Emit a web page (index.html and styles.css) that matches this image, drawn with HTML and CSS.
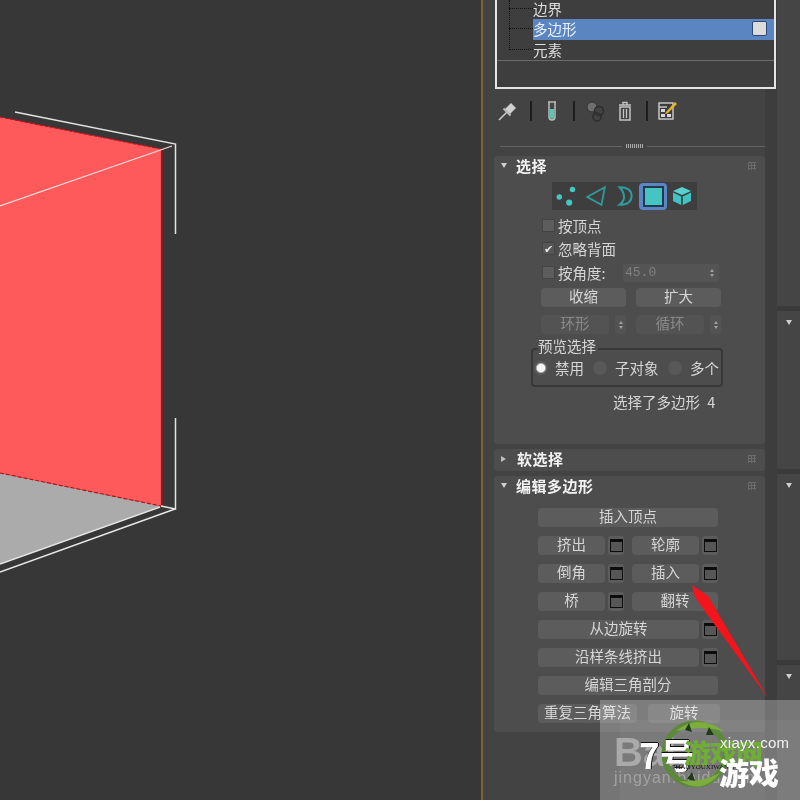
FILE: index.html
```html
<!DOCTYPE html>
<html lang="zh">
<head>
<meta charset="utf-8">
<title>3ds Max 编辑多边形</title>
<link rel="stylesheet" href="styles.css">
</head>
<body>
<div class="app">
  <svg class="viewport" width="481" height="800" viewBox="0 0 481 800">
    <polygon points="0,473 161,506 0,564" fill="#ababab"/>
    <polygon points="0,117 161,149 161,506 0,473" fill="#fe5a5c"/>
    <line x1="0" y1="117" x2="161" y2="149" stroke="#b3141a" stroke-width="1.2" stroke-dasharray="4 1"/>
    <line x1="0" y1="473" x2="161" y2="506" stroke="#b3141a" stroke-width="1.2" stroke-dasharray="4 2"/>
    <line x1="161.7" y1="149" x2="161.7" y2="506" stroke="#a81015" stroke-width="1.6"/>
    <line x1="0" y1="206" x2="172" y2="146" stroke="#f4dcd8" stroke-width="1.2"/>
    <polyline points="15,112 175.5,144 175.5,234" fill="none" stroke="#e2e2e2" stroke-width="1.5"/>
    <polyline points="175.5,418 175.5,509 161,506" fill="none" stroke="#e2e2e2" stroke-width="1.5"/>
    <line x1="160" y1="507" x2="0" y2="564" stroke="#e6e6e6" stroke-width="1.5"/>
    <line x1="175" y1="509" x2="0" y2="572" stroke="#e6e6e6" stroke-width="1.5"/>
  </svg>
  <div class="gold"></div>
  <div class="panel">
    <div class="list">
      <div class="trunk"></div>
      <div class="list-row first"><span class="branch"></span><span>边界</span></div>
      <div class="list-row selected"><span class="branch"></span><span class="sel-label">多边形</span><span class="swatch"></span></div>
      <div class="list-row last"><span class="branch"></span><span>元素</span></div>
    </div>

    <div class="toolbar">
      <svg width="20" height="20" viewBox="0 0 20 20"><path d="M1 19 L9 11" stroke="#c9c9c9" stroke-width="1.6"/><path d="M7 8 L13 2 L18 7 L12 13 Z" fill="#cfcfcf"/><path d="M5.5 7.5 L12.5 14.5" stroke="#bdbdbd" stroke-width="2"/></svg>
      <span class="tool-sep"></span>
      <svg width="12" height="20" viewBox="0 0 12 20"><path d="M2 1 H10 M3 1 V16 Q3 19 6 19 Q9 19 9 16 V1" fill="none" stroke="#bcbcbc" stroke-width="1.5"/><path d="M4 8 H8 V16 Q8 18 6 18 Q4 18 4 16 Z" fill="#56c8b4"/></svg>
      <span class="tool-sep"></span>
      <svg width="22" height="22" viewBox="0 0 22 22"><circle cx="7" cy="7" r="5" fill="#6f6f6f" stroke="#333" stroke-width="1"/><circle cx="14" cy="11" r="4.5" fill="none" stroke="#2e2e2e" stroke-width="1.6"/><circle cx="12" cy="17" r="4" fill="none" stroke="#2e2e2e" stroke-width="1.6"/></svg>
      <svg width="14" height="20" viewBox="0 0 14 20"><path d="M1 4 H13 M5 4 V1.5 H9 V4" fill="none" stroke="#c4c4c4" stroke-width="1.4"/><path d="M2 6 H12 V19 H2 Z" fill="none" stroke="#c4c4c4" stroke-width="1.5"/><path d="M5.5 8 V17 M8.5 8 V17" stroke="#c4c4c4" stroke-width="1.3"/></svg>
      <span class="tool-sep"></span>
      <svg width="20" height="20" viewBox="0 0 20 20"><rect x="1" y="2" width="14" height="16" fill="#3c3c3c" stroke="#cfcfcf" stroke-width="1.4"/><path d="M1 6 H9" stroke="#cfcfcf" stroke-width="1.4"/><path d="M3 8 H7 V11 H3 Z M3 13 H7 V16 H3 Z M9 13 H13 V16 H9 Z" fill="#d8d8d8"/><path d="M8 11 L17 1 L19 3 L10 12 L7 13 Z" fill="#e5b32a"/></svg>
    </div>

    <div class="divider"><span class="divider-line"></span><span class="divider-grip"></span><span class="divider-line"></span></div>

    <section class="rollout rollout-select">
      <header class="roll-head"><span class="tri-down"></span><h2>选择</h2><span class="grip"></span></header>
      <div class="subobj">
        <span class="sub-btn"><svg width="22" height="22" viewBox="0 0 20 20" fill="#43c7c5"><circle cx="3" cy="11" r="2.5"/><circle cx="15" cy="4" r="2.5"/><circle cx="12" cy="16" r="2.8"/></svg></span>
        <span class="sub-btn"><svg width="22" height="22" viewBox="0 0 20 20"><path d="M18 2 L2 11 L15 18 Z" fill="none" stroke="#2f9c9c" stroke-width="1.6"/></svg></span>
        <span class="sub-btn"><svg width="18" height="22" viewBox="0 0 16 20"><path d="M3 2 Q14 2 14 10 Q14 18 3 18 Q8 14 7 10 Q7 6 3 2 Z" fill="none" stroke="#2f9c9c" stroke-width="1.8"/></svg></span>
        <span class="sub-btn active"><span class="poly-square"></span></span>
        <span class="sub-btn"><svg width="20" height="20" viewBox="0 0 20 20"><path d="M10 1 L19 5 L10 9 L1 5 Z" fill="#56d3d1"/><path d="M1 6.5 L9.2 10.4 V19 L1 15 Z" fill="#3fc4c4"/><path d="M19 6.5 L10.8 10.4 V19 L19 15 Z" fill="#3fc4c4"/></svg></span>
      </div>
      <div class="checks">
        <label class="check-row"><span class="check"></span><span>按顶点</span></label>
        <label class="check-row"><span class="check checked">✔</span><span>忽略背面</span></label>
        <div class="check-row angle"><span class="check"></span><span class="angle-label">按角度:</span>
          <span class="spinner-field"><span class="spin-value">45.0</span><span class="spin-arrows"><i class="up"></i><i class="down"></i></span></span>
        </div>
      </div>
      <div class="btn-row first">
        <button class="btn grow">收缩</button>
        <button class="btn grow">扩大</button>
      </div>
      <div class="btn-row second">
        <div class="spin-pair"><button class="btn grow off">环形</button><span class="mini-spin"><i class="up"></i><i class="down"></i></span></div>
        <div class="spin-pair"><button class="btn grow off">循环</button><span class="mini-spin"><i class="up"></i><i class="down"></i></span></div>
      </div>
      <fieldset class="group">
        <legend>预览选择</legend>
        <span class="radio on"></span><span class="r1">禁用</span>
        <span class="radio"></span><span class="r2">子对象</span>
        <span class="radio"></span><span class="r3">多个</span>
      </fieldset>
      <p class="status">选择了多边形 4</p>
    </section>

    <section class="rollout rollout-soft">
      <header class="roll-head"><span class="tri-right"></span><h2>软选择</h2><span class="grip"></span></header>
    </section>

    <section class="rollout rollout-edit">
      <header class="roll-head"><span class="tri-down"></span><h2>编辑多边形</h2><span class="grip"></span></header>
      <div class="edit-grid">
        <button class="btn">插入顶点</button>
        <div class="split">
          <div class="pair"><button class="btn grow">挤出</button><span class="setting"><span class="window"></span></span></div>
          <div class="pair"><button class="btn grow">轮廓</button><span class="setting"><span class="window"></span></span></div>
        </div>
        <div class="split">
          <div class="pair"><button class="btn grow">倒角</button><span class="setting"><span class="window"></span></span></div>
          <div class="pair"><button class="btn grow">插入</button><span class="setting"><span class="window"></span></span></div>
        </div>
        <div class="split">
          <div class="pair"><button class="btn grow">桥</button><span class="setting"><span class="window"></span></span></div>
          <div class="pair"><button class="btn grow">翻转</button></div>
        </div>
        <div class="pair"><button class="btn grow">从边旋转</button><span class="setting"><span class="window"></span></span></div>
        <div class="pair"><button class="btn grow">沿样条线挤出</button><span class="setting"><span class="window"></span></span></div>
        <button class="btn">编辑三角剖分</button>
        <div class="last-row"><button class="btn retri">重复三角算法</button><button class="btn turn">旋转</button></div>
      </div>
    </section>
  </div>

  <div class="gutter"></div>
  <div class="side">
    <div class="side-box h1"></div>
    <div class="side-box h2"><span class="tri-down"></span></div>
    <div class="side-box h3"><span class="tri-down"></span></div>
    <div class="side-box h4"><span class="tri-down"></span></div>
  </div>

  <svg class="arrow" width="90" height="125" viewBox="0 0 90 125"><polygon points="2,0 18,11 32,35 78,113 14,25 5,12" fill="#f4141c"/></svg>

  <div class="mark">
    <div class="mark-inner">
      <span class="baidu">Bai</span>
      <span class="jingyan">jingyan.baidu.com</span>
      <svg class="globe" width="74" height="74" viewBox="0 0 74 74">
        <circle cx="37" cy="37" r="30.5" fill="none" stroke="#5d8a3a" stroke-width="6"/>
        <path d="M18 14 Q40 -4 66 14 Q42 8 18 14 Z" fill="#7dae3d"/>
        <path d="M22 64 Q45 78 62 56 Q42 66 22 64 Z" fill="#7dae3d"/>
        <path d="M27 13 L31 6 L34 15 Z M48 18 L51 10 L56 18 Z M29 62 L34 55 L37 64 Z" fill="#1f3a17"/>
      </svg>
      <span class="seven">7号</span>
      <span class="youxi-green">游戏网</span>
      <span class="domain">xiayx.com</span>
      <span class="pinyin">7HAOYOUXIWANG</span>
      <span class="youxi">游戏</span>
    </div>
  </div>
</div>
</body>
</html>
```

FILE: styles.css
```css
* { box-sizing: border-box; }
html, body { margin: 0; padding: 0; height: 100%; }
body { background: #373737; overflow: hidden; }

.app {
  position: relative;
  display: flex;
  width: 800px;
  height: 800px;
  overflow: hidden;
  font-family: "Noto Sans CJK SC", "Noto Sans", sans-serif;
  font-size: 14.5px;
  color: #d6d6d6;
  filter: blur(.5px);
}

.viewport { flex: none; display: block; background: #373737; }
.gold { flex: none; width: 3px; background: #7a6434; border-right: 1px solid #4d4534; }

.panel { flex: none; width: 281px; background: #434343; padding-left: 10px; display: flex; flex-direction: column; align-items: flex-start; }
.gutter { flex: none; width: 12px; background: #3d3d3d; }
.side { flex: 1; display: flex; flex-direction: column; gap: 5px; background: #3a3a3a; }
.side-box { background: #454545; position: relative; display: flex; justify-content: center; padding-top: 9px; }
.side-box.h1 { height: 306px; }
.side-box.h2 { height: 159px; }
.side-box.h3 { height: 186px; }
.side-box.h4 { height: 135px; }

/* list */
.list {
  position: relative;
  width: 281px;
  height: 89px;
  border: 2px solid #e4e4e4;
  border-top: 0;
  background: #3e3e3e;
  margin-left: 1px;
}
.trunk { position: absolute; left: 12px; top: 0; height: 50px; border-left: 1px dotted #111; }
.list-row { display: flex; align-items: center; height: 20px; padding-bottom: 2px; color: #dedede; line-height: 17px; }
.list-row.first { height: 19px; }
.list-row.selected { height: 21px; background: linear-gradient(#5b85c0, #5b85c0) no-repeat 36px 0 / 100% 100%; }
.list-row.last { box-shadow: 0 1px 0 #6a6a6a; }
.branch { flex: none; width: 24px; margin-left: 12px; border-bottom: 1px dotted #111; }
.sel-label { flex: 1; color: #e8f0ff; }
.swatch { flex: none; width: 15px; height: 15px; margin-right: 7px; background: #dcdcdc; border: 1px solid #2d4a75; border-radius: 2px; }

/* toolbar */
.toolbar {
  display: grid;
  grid-template-columns: 24px 22px 20px 24px 20px 38px 6px 36px;
  justify-items: center;
  align-items: center;
  margin: 10px 0 0 2px;
  height: 24px;
}
.tool-sep { width: 2px; height: 20px; background: #1d1d1d; }

.divider { display: flex; align-items: center; width: 268px; margin: 21px 0 0 6px; height: 4px; }
.divider-line { flex: 1; height: 1px; background: #636363; }
.divider-grip { width: 17px; height: 4px; margin: 0 4px; background: repeating-linear-gradient(90deg, #a8a8a8 0 1px, #4a4a4a 1px 2px); }

/* rollouts */
.rollout { width: 271px; background: #4d4d4d; border-radius: 3px; flex: none; }
.rollout-select { height: 288px; margin-top: 8px; }
.rollout-soft { height: 22px; margin-top: 5px; }
.rollout-edit { height: 256px; margin-top: 5px; }
.roll-head { display: flex; align-items: center; height: 22px; padding: 0 0 3px 7px; position: relative; }
.roll-head h2 { margin: 0 0 0 9px; font-size: 15px; letter-spacing: .5px; font-weight: 700; color: #f2f2f2; line-height: 19px; }
.tri-down, .tri-right { flex: none; display: inline-block; width: 0; height: 0; }
.tri-down { border-left: 3.5px solid transparent; border-right: 3.5px solid transparent; border-top: 5px solid #cfcfcf; }
.tri-right { border-top: 3.5px solid transparent; border-bottom: 3.5px solid transparent; border-left: 5px solid #bdbdbd; margin-right: 2px; }
.grip { position: absolute; right: 9px; top: 6px; width: 8px; height: 8px; background-image: linear-gradient(#6c6c6c 1px, transparent 1px), linear-gradient(90deg, #6c6c6c 1px, transparent 1px); background-size: 3px 3px; }

.subobj { display: flex; align-items: center; width: 145px; height: 28px; margin: 4px 0 0 58px; background: #3e3e3e; }
.sub-btn { display: flex; flex: none; width: 29px; height: 27px; align-items: center; justify-content: center; }
.sub-btn.active { width: 28px; background: #5b85c6; border-radius: 4px; }
.poly-square { width: 21px; height: 21px; background: #45c4c2; border: 2px solid #1f3b4a; }

.checks { margin: 4px 0 0 48px; }
.check-row { display: flex; align-items: center; height: 23px; line-height: 20px; }
.check-row.angle { margin-top: 1px; }
.check { flex: none; width: 13px; height: 13px; margin-right: 3px; background: #5d5d5d; border: 1px solid #444; font-size: 11px; line-height: 11px; color: #e6e6e6; text-align: center; }
.check.checked { background: #565656; }
.angle-label { flex: none; width: 65px; white-space: nowrap; }
.spinner-field { display: flex; align-items: center; justify-content: space-between; width: 96px; height: 18px; padding: 0 5px 0 2px; background: #545454; color: #808080; font-family: "Liberation Mono", monospace; font-size: 13px; border-radius: 2px; }
.spin-arrows, .mini-spin { display: flex; flex-direction: column; gap: 2px; align-items: center; }
.spin-arrows i, .mini-spin i { display: block; width: 0; height: 0; border-left: 2.5px solid transparent; border-right: 2.5px solid transparent; }
i.up { border-bottom: 3px solid #a0a0a0; }
i.down { border-top: 3px solid #a0a0a0; }

.btn-row { display: flex; gap: 10px; margin-left: 47px; width: 180px; }
.btn-row.first { margin-top: 4px; }
.btn-row.second { margin-top: 8px; }
.btn { display: block; height: 19px; padding: 0 0 4px; border: 0; border-radius: 4px; background: #5c5c5c; color: #d6d6d6; font: inherit; line-height: 15px; text-align: center; }
.btn.off { color: #8a8a8a; background: #535353; }
.grow { flex: 1; min-width: 0; }
.spin-pair { flex: 1; display: flex; gap: 6px; }
.mini-spin { flex: none; width: 11px; height: 19px; justify-content: center; background: #535353; border-radius: 3px; }

.group { position: relative; display: flex; align-items: center; width: 192px; height: 39px; margin: 14px 0 0 37px; padding: 1px 0 0 1px; border: 2px solid #383838; border-radius: 4px; line-height: 18px; }
.group legend { position: absolute; left: 5px; top: -13px; padding: 0 2px 0 0; line-height: 18px; background: #4d4d4d; }
.radio { flex: none; width: 14px; height: 14px; border-radius: 50%; background: #585858; }
.radio.on { background: radial-gradient(#f4f4f4 38%, #5a5a5a 55%); }
.r1 { margin: 0 9px 0 7px; width: 29px; white-space: nowrap; }
.r2 { margin: 0 8px; width: 45px; white-space: nowrap; }
.r3 { margin-left: 8px; white-space: nowrap; }
.status { margin: 6px 0 0 119px; line-height: 18px; height: 18px; white-space: nowrap; word-spacing: 4px; }

.edit-grid { display: flex; flex-direction: column; gap: 9px; width: 180px; margin: 10px 0 0 44px; }
.split { display: flex; gap: 8px; }
.pair { flex: 1; display: flex; gap: 3px; min-width: 0; }
.setting { display: flex; flex: none; width: 16px; height: 19px; padding: 3px 1.5px 0; align-items: flex-start; background: #5c5c5c; border-radius: 3px; }
.window { display: block; width: 13px; height: 13px; background: #565656; border: 1.5px solid #0d0d0d; border-top-width: 3px; }
.last-row { display: flex; gap: 11px; width: 182px; }
.retri { width: 99px; white-space: nowrap; }
.turn { width: 72px; }

/* overlays */
.arrow { position: absolute; left: 690px; top: 585px; }
.mark { position: absolute; left: 600px; top: 700px; width: 200px; height: 100px; padding: 20px 0 0 20px; background: rgba(255,255,255,.27); }
.mark-inner { position: relative; width: 180px; height: 80px; background: rgba(255,255,255,.04); }
.mark-inner span, .globe { position: absolute; white-space: nowrap; }
.baidu { left: -6px; top: 10px; font: 700 40px/44px "Liberation Sans", sans-serif; color: #aaaaaa; }
.jingyan { left: -6px; top: 48px; font: 16px/20px "Liberation Sans", sans-serif; letter-spacing: 1px; color: #a2a2a2; }
.globe { left: 38px; top: -3px; }
.seven { left: 19px; top: 12px; font-size: 35px; line-height: 44px; font-weight: 700; color: #fff; text-shadow: 1px 0 0 #111, 0 -1px 0 #111; }
.youxi-green { left: 64px; top: 16px; font-size: 27px; line-height: 34px; font-weight: 900; color: #6fae35; letter-spacing: -1px; }
.domain { left: 100px; top: 14px; font: 15px/18px "Liberation Sans", sans-serif; color: #f2f2f2; letter-spacing: .3px; }
.pinyin { left: 52px; top: 43px; font: 7px/9px "Liberation Serif", serif; color: #111; }
.youxi { left: 99px; top: 33px; font-size: 30px; line-height: 36px; font-weight: 900; color: #fff; }
```
